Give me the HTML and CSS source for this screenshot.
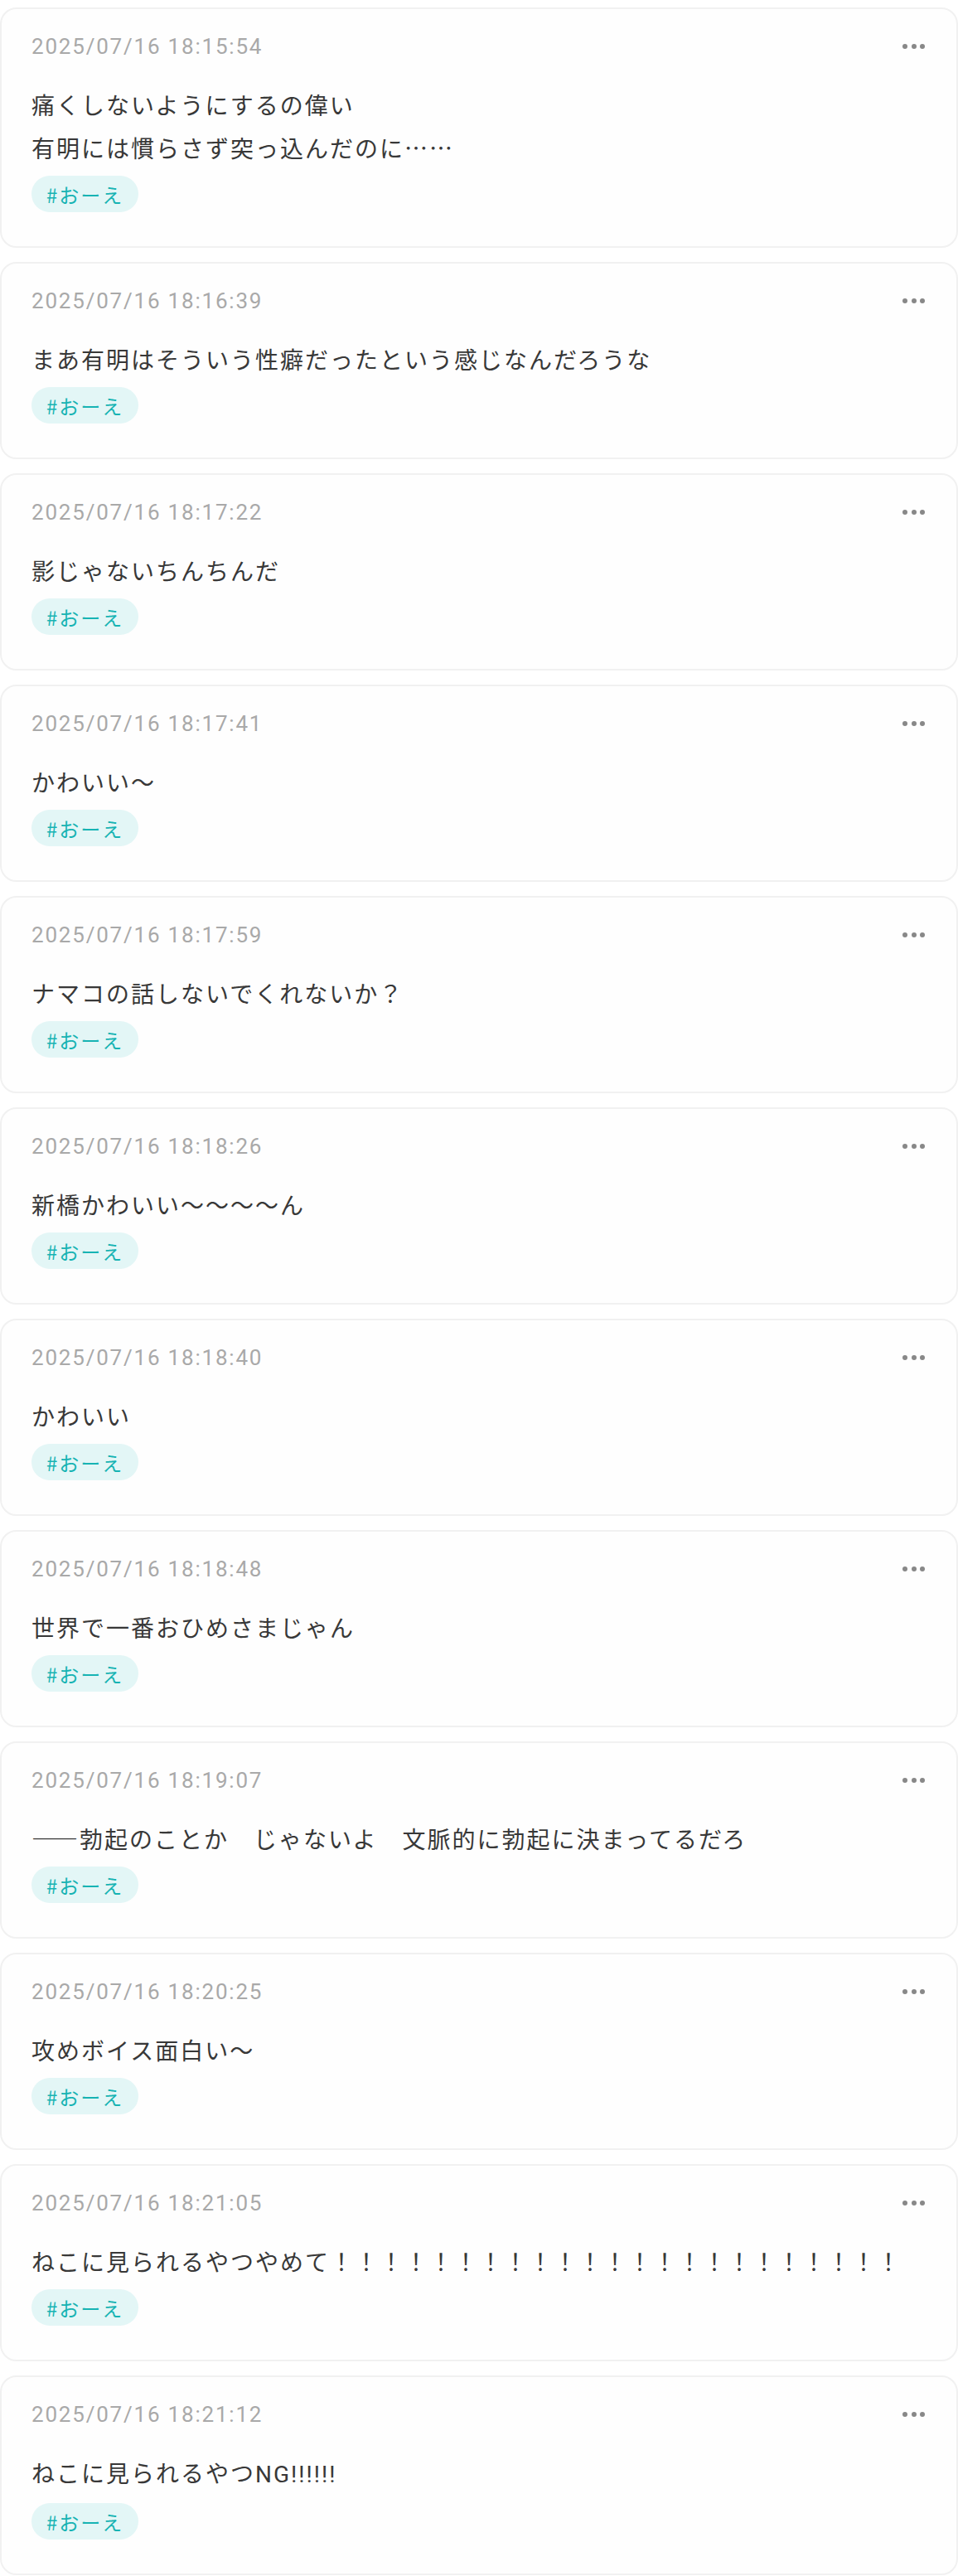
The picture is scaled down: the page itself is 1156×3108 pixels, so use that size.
FILE: index.html
```html
<!DOCTYPE html>
<html lang="ja">
<head>
<meta charset="utf-8">
<title>memo</title>
<link rel="stylesheet" href="styles.css">
</head>
<body>
<main class="feed">
  <article class="card">
    <div class="card-head"><time class="stamp">2025/07/16 18:15:54</time><span class="more"><i></i><i></i><i></i></span></div>
    <p class="body">痛くしないようにするの偉い<br>有明には慣らさず突っ込んだのに……</p>
    <span class="tag">#おーえ</span>
  </article>
  <article class="card">
    <div class="card-head"><time class="stamp">2025/07/16 18:16:39</time><span class="more"><i></i><i></i><i></i></span></div>
    <p class="body">まあ有明はそういう性癖だったという感じなんだろうな</p>
    <span class="tag">#おーえ</span>
  </article>
  <article class="card">
    <div class="card-head"><time class="stamp">2025/07/16 18:17:22</time><span class="more"><i></i><i></i><i></i></span></div>
    <p class="body">影じゃないちんちんだ</p>
    <span class="tag">#おーえ</span>
  </article>
  <article class="card">
    <div class="card-head"><time class="stamp">2025/07/16 18:17:41</time><span class="more"><i></i><i></i><i></i></span></div>
    <p class="body">かわいい〜</p>
    <span class="tag">#おーえ</span>
  </article>
  <article class="card">
    <div class="card-head"><time class="stamp">2025/07/16 18:17:59</time><span class="more"><i></i><i></i><i></i></span></div>
    <p class="body">ナマコの話しないでくれないか？</p>
    <span class="tag">#おーえ</span>
  </article>
  <article class="card">
    <div class="card-head"><time class="stamp">2025/07/16 18:18:26</time><span class="more"><i></i><i></i><i></i></span></div>
    <p class="body">新橋かわいい〜〜〜〜ん</p>
    <span class="tag">#おーえ</span>
  </article>
  <article class="card">
    <div class="card-head"><time class="stamp">2025/07/16 18:18:40</time><span class="more"><i></i><i></i><i></i></span></div>
    <p class="body">かわいい</p>
    <span class="tag">#おーえ</span>
  </article>
  <article class="card">
    <div class="card-head"><time class="stamp">2025/07/16 18:18:48</time><span class="more"><i></i><i></i><i></i></span></div>
    <p class="body">世界で一番おひめさまじゃん</p>
    <span class="tag">#おーえ</span>
  </article>
  <article class="card">
    <div class="card-head"><time class="stamp">2025/07/16 18:19:07</time><span class="more"><i></i><i></i><i></i></span></div>
    <p class="body">——勃起のことか　じゃないよ　文脈的に勃起に決まってるだろ</p>
    <span class="tag">#おーえ</span>
  </article>
  <article class="card">
    <div class="card-head"><time class="stamp">2025/07/16 18:20:25</time><span class="more"><i></i><i></i><i></i></span></div>
    <p class="body">攻めボイス面白い〜</p>
    <span class="tag">#おーえ</span>
  </article>
  <article class="card">
    <div class="card-head"><time class="stamp">2025/07/16 18:21:05</time><span class="more"><i></i><i></i><i></i></span></div>
    <p class="body">ねこに見られるやつやめて！！！！！！！！！！！！！！！！！！！！！！！</p>
    <span class="tag">#おーえ</span>
  </article>
  <article class="card">
    <div class="card-head"><time class="stamp">2025/07/16 18:21:12</time><span class="more"><i></i><i></i><i></i></span></div>
    <p class="body">ねこに見られるやつ<span class="latin">NG!!!!!!</span></p>
    <span class="tag">#おーえ</span>
  </article>
</main>
</body>
</html>
```

FILE: styles.css
```css
html, body {
  margin: 0;
  padding: 0;
  background: #ffffff;
}

body {
  font-family: "Noto Sans CJK JP", "Noto Sans", sans-serif;
  color: #333333;
}

.feed {
  display: flex;
  flex-direction: column;
  gap: 17px;
  padding-top: 9px;
}

.card {
  border: 2px solid #f1f1f1;
  border-radius: 20px;
  background: #fefefe;
  padding: 27px 38px 41px 36px;
  display: flex;
  flex-direction: column;
  align-items: flex-start;
}

.card-head {
  align-self: stretch;
  display: flex;
  align-items: center;
  justify-content: space-between;
  height: 36px;
}

.stamp {
  font-family: Roboto, "Noto Sans", sans-serif;
  font-size: 26px;
  letter-spacing: 1.8px;
  color: #a9a9a9;
  line-height: 36px;
}

.more {
  display: flex;
  gap: 4.5px;
  align-items: center;
}

.more i {
  display: block;
  width: 6px;
  height: 6px;
  border-radius: 50%;
  background: #888888;
}

.body {
  margin: 26px 0 8px;
  font-size: 28px;
  line-height: 52px;
  letter-spacing: 2px;
  color: #383838;
}

.latin {
  font-family: Roboto, sans-serif;
}

.tag {
  display: inline-flex;
  align-items: center;
  height: 44px;
  padding: 0 18px;
  border-radius: 22px;
  background: #e3f6f6;
  color: #17b3b3;
  font-size: 24px;
  letter-spacing: 2px;
}
```
